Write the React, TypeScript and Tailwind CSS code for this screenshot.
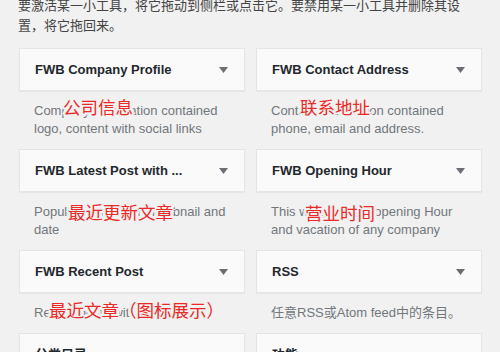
const widgets = [
  {
    title: 'FWB Company Profile',
    desc: 'Company information contained logo, content with social links',
    note: '公司信息',
    noteClass: 'left-[44px] top-[4px]',
  },
  {
    title: 'FWB Contact Address',
    desc: 'Contact information contained phone, email and address.',
    note: '联系地址',
    noteClass: 'left-[44px] top-[4px]',
  },
  {
    title: 'FWB Latest Post with ...',
    desc: 'Popular posts with thumbnail and date',
    note: '最近更新文章',
    noteClass: 'left-[49px] top-[8px]',
  },
  {
    title: 'FWB Opening Hour',
    desc: 'This widget show opening Hour and vacation of any company',
    note: '营业时间',
    noteClass: 'left-[49px] top-[9px]',
  },
  {
    title: 'FWB Recent Post',
    desc: 'Recent posts with thumbnail.',
    note: '最近文章（图标展示）',
    noteClass: 'left-[30px] top-[5px]',
  },
  {
    title: 'RSS',
    desc: '任意RSS或Atom feed中的条目。',
  },
  { title: '分类目录', desc: '' },
  { title: '功能', desc: '' },
];

function Arrow() {
  return (
    <svg width="9" height="6" viewBox="0 0 9 6" className="shrink-0">
      <polygon points="0,0 9,0 4.5,6" fill="#6b6f73" />
    </svg>
  );
}

export default function App() {
  return (
    <div className="w-[500px] h-[352px] overflow-hidden bg-[#f1f1f1] font-['Liberation_Sans','Noto_Sans_CJK_SC',sans-serif]">
      <p className="-mt-[5px] ml-[18px] w-[450px] text-[13px] leading-[20px] text-[#444] font-['Noto_Sans_CJK_SC',sans-serif]">
        要激活某一小工具，将它拖动到侧栏或点击它。要禁用某一小工具并删除其设置，将它拖回来。
      </p>

      <div className="mt-[13px] ml-[19px] grid grid-cols-[226px_226px] gap-x-[11px]">
        {widgets.map(w => (
          <div key={w.title}>
            <div className="h-[43px] flex items-center justify-between pl-[15px] pr-[16px] bg-[#fafafa] border border-[#e5e5e5] shadow-[0_1px_1px_rgba(0,0,0,0.04)]">
              <h3 className="text-[13px] font-bold text-[#23282d] font-['Liberation_Sans','Noto_Sans_CJK_SC',sans-serif]">
                {w.title}
              </h3>
              <Arrow />
            </div>
            <div className="relative pt-[11px] pb-[11px] px-[15px] text-[13px] leading-[18px] text-[#72777c]">
              {w.desc}
              {w.note && (
                <span
                  className={`absolute ${w.noteClass} whitespace-nowrap text-[17.5px] leading-[24px] text-[#ea2a27] font-['Noto_Sans_CJK_SC',sans-serif] [text-shadow:2px_0_#f1f1f1,-2px_0_#f1f1f1,0_2px_#f1f1f1,0_-2px_#f1f1f1,2px_2px_#f1f1f1,-2px_-2px_#f1f1f1,2px_-2px_#f1f1f1,-2px_2px_#f1f1f1,3px_0_#f1f1f1,-3px_0_#f1f1f1]`}
                >
                  {w.note}
                </span>
              )}
            </div>
          </div>
        ))}
      </div>
    </div>
  );
}
